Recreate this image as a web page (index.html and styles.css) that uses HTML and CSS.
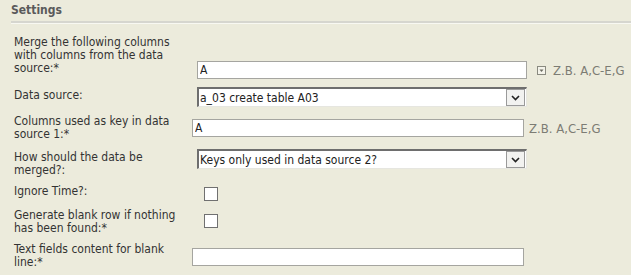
FILE: index.html
```html
<!DOCTYPE html>
<html lang="en">
<head>
    <meta charset="UTF-8">
    <title>Settings</title>
    <link rel="stylesheet" href="styles.css">
</head>
<body>
    <div class="settings">
        <h3 class="section-title">Settings</h3>

        <div class="form">
            <div class="row row-merge">
                <label class="label">Merge the following columns with columns from the data source:*</label>
                <div class="field">
                    <input type="text" class="text-input wide" value="A">
                    <span class="picker-icon">
                        <svg width="9" height="9" viewBox="0 0 9 9">
                            <rect x="0.5" y="0.5" width="8" height="8" fill="#f4f3ea" stroke="#8a8a80"/>
                            <path d="M2.5 3.5h4l-2 2.5z" fill="#6a6a60"/>
                        </svg>
                    </span>
                    <span class="hint">Z.B. A,C-E,G</span>
                </div>
            </div>

            <div class="row row-select">
                <label class="label">Data source:</label>
                <div class="field">
                    <div class="select-box">
                        <span class="select-value">a_03 create table A03</span>
                        <span class="select-btn">
                            <svg width="9" height="6" viewBox="0 0 9 6"><path d="M1 1l3.5 3.5L8 1" fill="none" stroke="#222" stroke-width="1.6"/></svg>
                        </span>
                    </div>
                </div>
            </div>

            <div class="row row-key">
                <label class="label">Columns used as key in data source 1:*</label>
                <div class="field">
                    <input type="text" class="text-input shifted" value="A">
                    <span class="hint">Z.B. A,C-E,G</span>
                </div>
            </div>

            <div class="row row-select">
                <label class="label">How should the data be merged?:</label>
                <div class="field">
                    <div class="select-box">
                        <span class="select-value">Keys only used in data source 2?</span>
                        <span class="select-btn">
                            <svg width="9" height="6" viewBox="0 0 9 6"><path d="M1 1l3.5 3.5L8 1" fill="none" stroke="#222" stroke-width="1.6"/></svg>
                        </span>
                    </div>
                </div>
            </div>

            <div class="row row-check">
                <label class="label">Ignore Time?:</label>
                <div class="field">
                    <input type="checkbox" class="check">
                </div>
            </div>

            <div class="row row-check2">
                <label class="label">Generate blank row if nothing has been found:*</label>
                <div class="field">
                    <input type="checkbox" class="check">
                </div>
            </div>

            <div class="row row-blank">
                <label class="label">Text fields content for blank line:*</label>
                <div class="field">
                    <input type="text" class="text-input shifted" value="">
                </div>
            </div>
        </div>
    </div>
</body>
</html>
```

FILE: styles.css
```css
body {
    margin: 0;
    background-color: #ecebdc;
    font-family: "DejaVu Sans Condensed", "DejaVu Sans", sans-serif;
    font-size: 12px;
    color: #333;
}

.settings {
    padding: 0 0 0 11px;
}

.section-title {
    margin: 0;
    padding-top: 3px;
    height: 18px;
    font-size: 12px;
    font-weight: bold;
    color: #5a5a5a;
    border-bottom: 2px solid #d6d6cf;
    box-shadow: 0 1px 0 #f8f8f2;
}

.form {
    padding: 13px 0 0 3px;
}

.row {
    display: flex;
    align-items: flex-start;
    margin-bottom: 8px;
}

.label {
    width: 163px;
    flex: none;
    line-height: 13px;
    color: #333;
}

.field {
    display: flex;
    align-items: center;
    padding-left: 20px;
}

/* row specific offsets */
.row-merge .field { margin-top: 25px; }
.row-select .label { padding-top: 2px; }
.row-key .field { margin-top: 4px; }
.row-check .field { margin-top: 2px; }
.row-check2 { margin-top: 2px; }
.row-check2 .field { margin-top: 5px; }
.row-blank .field { margin-top: 5px; }

.text-input {
    box-sizing: border-box;
    width: 330px;
    height: 18px;
    margin: 0;
    padding: 0 2px;
    border: 1px solid #a5a5a0;
    background: #fff;
    font-family: "DejaVu Sans Condensed", "DejaVu Sans", sans-serif;
    font-size: 12px;
    color: #222;
    outline: none;
}

.text-input.shifted {
    margin-left: -5px;
    width: 332px;
}

.picker-icon {
    display: flex;
    margin-left: 10px;
}

.hint {
    margin-left: 7px;
    color: #7c7c74;
    font-size: 13px;
}

.shifted + .hint {
    margin-left: 5px;
}

.select-box {
    box-sizing: border-box;
    width: 330px;
    height: 20px;
    display: flex;
    align-items: center;
    background: #fff;
    border-top: 2px solid #6e6e6e;
    border-left: 2px solid #6e6e6e;
    border-right: 1px solid #e6e6e0;
    border-bottom: 1px solid #e6e6e0;
}

.select-value {
    flex: 1;
    padding-left: 1px;
    color: #222;
    font-size: 12px;
}

.select-btn {
    box-sizing: border-box;
    width: 19px;
    height: 17px;
    margin-right: 1px;
    display: flex;
    align-items: center;
    justify-content: center;
    background: #f2f2f0;
    border: 1px solid #9a9a9a;
}

.check {
    appearance: none;
    -webkit-appearance: none;
    box-sizing: border-box;
    width: 14px;
    height: 14px;
    margin: 0 0 0 7px;
    border: 1px solid #707070;
    background: #fff;
}
```
